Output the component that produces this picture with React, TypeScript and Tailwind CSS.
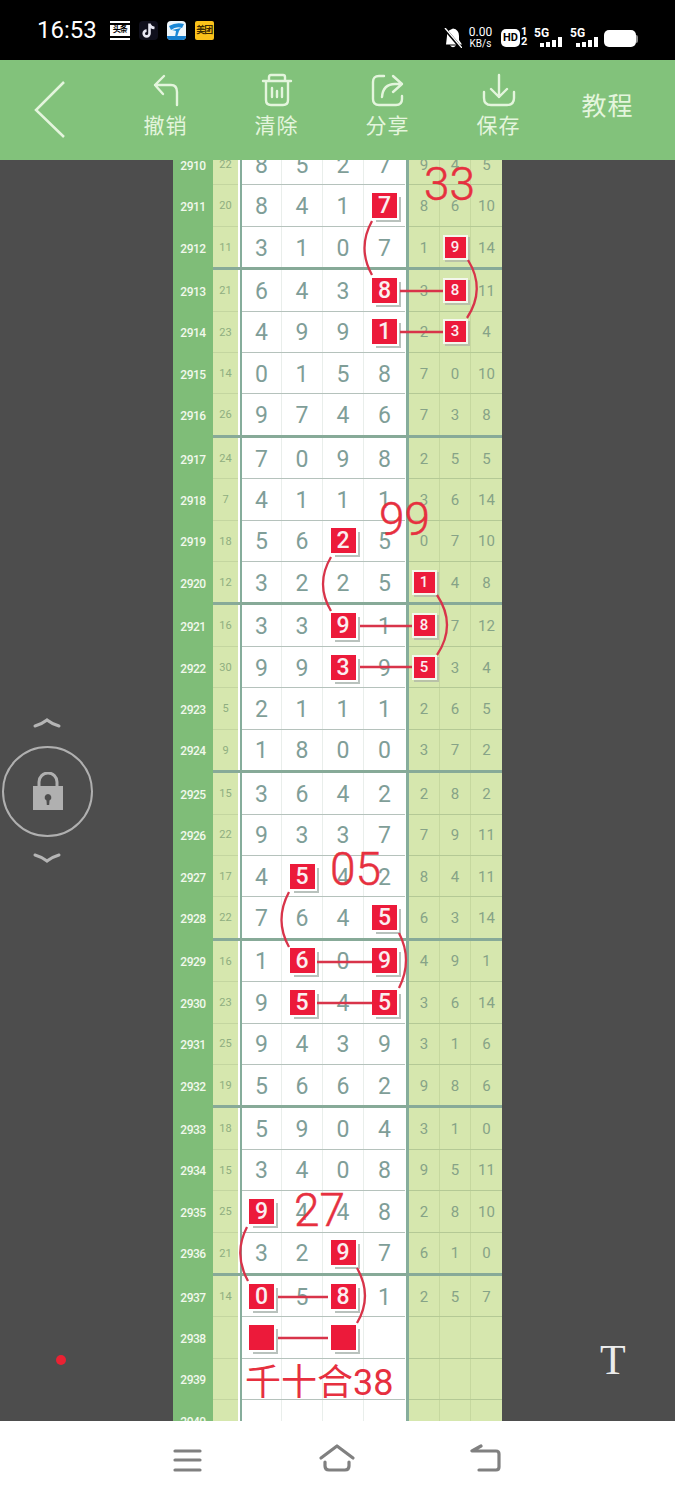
import type { ReactNode } from "react";

type Row = {
  no: number;
  count?: number;
  main?: (number | null)[];
  side?: number[];
  hitMain?: number[];
  hitSide?: number[];
};

const rows: Row[] = [
  { no: 2910, count: 22, main: [8, 5, 2, 7], side: [9, 4, 5] },
  { no: 2911, count: 20, main: [8, 4, 1, 7], side: [8, 6, 10], hitMain: [3] },
  { no: 2912, count: 11, main: [3, 1, 0, 7], side: [1, 9, 14], hitSide: [1] },
  { no: 2913, count: 21, main: [6, 4, 3, 8], side: [3, 8, 11], hitMain: [3], hitSide: [1] },
  { no: 2914, count: 23, main: [4, 9, 9, 1], side: [2, 3, 4], hitMain: [3], hitSide: [1] },
  { no: 2915, count: 14, main: [0, 1, 5, 8], side: [7, 0, 10] },
  { no: 2916, count: 26, main: [9, 7, 4, 6], side: [7, 3, 8] },
  { no: 2917, count: 24, main: [7, 0, 9, 8], side: [2, 5, 5] },
  { no: 2918, count: 7, main: [4, 1, 1, 1], side: [3, 6, 14] },
  { no: 2919, count: 18, main: [5, 6, 2, 5], side: [0, 7, 10], hitMain: [2] },
  { no: 2920, count: 12, main: [3, 2, 2, 5], side: [1, 4, 8], hitSide: [0] },
  { no: 2921, count: 16, main: [3, 3, 9, 1], side: [8, 7, 12], hitMain: [2], hitSide: [0] },
  { no: 2922, count: 30, main: [9, 9, 3, 9], side: [5, 3, 4], hitMain: [2], hitSide: [0] },
  { no: 2923, count: 5, main: [2, 1, 1, 1], side: [2, 6, 5] },
  { no: 2924, count: 9, main: [1, 8, 0, 0], side: [3, 7, 2] },
  { no: 2925, count: 15, main: [3, 6, 4, 2], side: [2, 8, 2] },
  { no: 2926, count: 22, main: [9, 3, 3, 7], side: [7, 9, 11] },
  { no: 2927, count: 17, main: [4, 5, 4, 2], side: [8, 4, 11], hitMain: [1] },
  { no: 2928, count: 22, main: [7, 6, 4, 5], side: [6, 3, 14], hitMain: [3] },
  { no: 2929, count: 16, main: [1, 6, 0, 9], side: [4, 9, 1], hitMain: [1, 3] },
  { no: 2930, count: 23, main: [9, 5, 4, 5], side: [3, 6, 14], hitMain: [1, 3] },
  { no: 2931, count: 25, main: [9, 4, 3, 9], side: [3, 1, 6] },
  { no: 2932, count: 19, main: [5, 6, 6, 2], side: [9, 8, 6] },
  { no: 2933, count: 18, main: [5, 9, 0, 4], side: [3, 1, 0] },
  { no: 2934, count: 15, main: [3, 4, 0, 8], side: [9, 5, 11] },
  { no: 2935, count: 25, main: [9, 4, 4, 8], side: [2, 8, 10], hitMain: [0] },
  { no: 2936, count: 21, main: [3, 2, 9, 7], side: [6, 1, 0], hitMain: [2] },
  { no: 2937, count: 14, main: [0, 5, 8, 1], side: [2, 5, 7], hitMain: [0, 2] },
  { no: 2938, main: [null, null, null, null], hitMain: [0, 2] },
  { no: 2939 },
  { no: 2940 },
];

const mainWidths = ["w-[40px]", "w-[41px]", "w-[41px]", "w-[41px]"];

function MainCell({ value, hit, index }: { value: number | null | undefined; hit: boolean; index: number }) {
  return (
    <div className={`${mainWidths[index]} flex h-full items-center justify-center border-r border-[#e9eeeb] last:border-r-0`}>
      {hit ? (
        <div className="flex h-[25px] w-[25px] items-center justify-center bg-[#ec1a3a] text-[23px] font-medium leading-none text-[#fbeef0] shadow-[2px_2px_0_#ffffff,4px_4px_0_#b9c2bd]">
          {value}
        </div>
      ) : (
        <span className="pt-[2px] text-[23px] leading-none text-[#7f9e98]">{value}</span>
      )}
    </div>
  );
}

function SideCell({ value, hit }: { value?: number; hit: boolean }) {
  return (
    <div className="flex h-full w-[31px] items-center justify-center border-r border-[#c6d89f] last:border-r-0">
      {hit ? (
        <div className="flex h-[21px] w-[21px] items-center justify-center bg-[#ec1a3a] text-[15px] font-medium leading-none text-[#fbeef0] shadow-[0_0_0_2px_#f4f7ec,2px_2px_0_2px_#b9c2a8]">
          {value}
        </div>
      ) : (
        <span className="pt-[2px] text-[15px] leading-none text-[#86a387]">{value}</span>
      )}
    </div>
  );
}

function TableRow({ row }: { row: Row }) {
  return (
    <div className="flex h-[41.42px] w-[329px]">
      <div className="flex w-[40px] items-center justify-center bg-[#7fbd78] pt-[2px] text-[12px] font-medium tracking-[-0.5px] text-[#f1f8ec]">
        {row.no}
      </div>
      <div className="flex w-[25px] items-center justify-center border-b border-[#c4d6a0] bg-[#d6e7ae] pt-[2px] text-[11px] text-[#8fae80]">
        {row.count}
      </div>
      <div className="w-[2px] bg-white" />
      <div className="w-[2px] bg-[#86ad9b]" />
      <div className="flex border-b border-[#b5c2bc] bg-white">
        {[0, 1, 2, 3].map((i) => (
          <MainCell key={i} index={i} value={row.main?.[i]} hit={!!row.hitMain?.includes(i)} />
        ))}
      </div>
      <div className="w-[1px] bg-white" />
      <div className="w-[3px] bg-[#86ad9b]" />
      <div className="flex border-b border-[#b4c995] bg-[#d6e7ae]">
        {[0, 1, 2].map((i) => (
          <SideCell key={i} value={row.side?.[i]} hit={!!row.hitSide?.includes(i)} />
        ))}
      </div>
    </div>
  );
}

function GroupLine() {
  return (
    <div className="relative -mt-px flex h-[3px] w-[329px] bg-[#87aa98]">
      <div className="w-[40px] bg-[#7fbd78]" />
    </div>
  );
}

function ToolButton({ icon, label }: { icon: ReactNode; label: string }) {
  return (
    <div className="flex w-[111px] flex-col items-center">
      {icon}
      <span className="mt-[6px] text-[21px] leading-[26px] tracking-[1px] text-[#e4f5dd]">{label}</span>
    </div>
  );
}

function Arcs() {
  const arcs = [
    "M372 221Q357 248 372 275",
    "M468 260Q486 289 467 318",
    "M331 557Q315 584 331 611",
    "M437 595Q457 625 437 655",
    "M289 892Q274 920 289 947",
    "M399 933Q413 960 399 988",
    "M247 1227Q233 1254 248 1281",
    "M357 1268Q373 1296 357 1323",
  ];
  const lines = [
    [400, 291, 443],
    [400, 332, 443],
    [360, 626, 412],
    [360, 667, 412],
    [317, 962, 372],
    [317, 1003, 372],
    [278, 1297, 328],
    [278, 1338, 328],
  ];
  return (
    <svg className="absolute left-0 top-0" width="675" height="1421" viewBox="0 0 675 1421" fill="none" stroke="#d8344a" strokeWidth="2.3">
      {arcs.map((d) => (
        <path key={d} d={d} />
      ))}
      {lines.map(([x1, y, x2]) => (
        <line key={y} x1={x1} y1={y} x2={x2} y2={y} />
      ))}
    </svg>
  );
}

function Note({ className, children }: { className: string; children: ReactNode }) {
  return <div className={`absolute font-light leading-none text-[#e6303f] [-webkit-text-stroke:0.5px_#e6303f] ${className}`}>{children}</div>;
}

function Signal({ left }: { left: string }) {
  return (
    <div className={`absolute top-[26px] ${left} h-[22px] w-[30px]`}>
      <span className="absolute left-0 top-[1px] text-[12px] font-bold leading-[12px]">5G</span>
      <div className="absolute bottom-[1px] left-[6px] flex items-end gap-[2px]">
        <div className="h-[4px] w-[4px] bg-white" />
        <div className="h-[5px] w-[4px] bg-white" />
        <div className="h-[7px] w-[4px] bg-white" />
        <div className="h-[10px] w-[4px] bg-white" />
      </div>
    </div>
  );
}

function StatusBar() {
  return (
    <div className="relative flex h-[60px] items-center bg-black pl-[37px] text-white">
      <span className="text-[24px] leading-none">16:53</span>
      <div className="ml-[13px] flex items-center gap-[9px]">
        <div className="flex h-[19px] w-[20px] items-center justify-center border-y-2 border-white">
          <div className="flex h-[11px] w-full items-center justify-center bg-white text-[8px] font-bold leading-none tracking-[-1px] text-black">头条</div>
        </div>
        <div className="flex h-[19px] w-[19px] items-center justify-center rounded-[4px] bg-[#10101c]">
          <svg width="13" height="15" viewBox="0 0 13 15" fill="none" stroke="#e8e8f2" strokeWidth="2.6">
            <path d="M7.5 0.5V10.5A2.9 2.9 0 1 1 4.6 7.6M7.5 1.5Q8.5 4.5 12.5 5" />
          </svg>
        </div>
        <div className="relative flex h-[19px] w-[19px] items-center justify-center overflow-hidden rounded-[4px] bg-[#eef6fb]">
          <svg width="17" height="14" viewBox="0 0 17 14" fill="#1a88d6">
            <path d="M1 3Q8 -1 16 1L14 5Q8 3 3 7ZM4 7L13 5 11 8 9 14H7L8 8Z" />
          </svg>
          <div className="absolute bottom-0 h-[4px] w-full bg-[#1680d0]" />
        </div>
        <div className="flex h-[19px] w-[19px] items-center justify-center rounded-[2px] bg-[#fbc21a] text-[9px] font-bold leading-none tracking-[-1px] text-[#3a2a00]">美团</div>
      </div>
      <div className="absolute left-[444px] top-[28px]">
        <svg width="18" height="20" viewBox="0 0 18 20" fill="#fff">
          <path d="M9 0.5Q15 1.5 15 8V12L18 16.5H2L3 8Q3 4 5 2.5ZM6 17.5H12Q9 21 6 17.5Z" />
          <path d="M0 0L17 20" stroke="#000" strokeWidth="3" />
          <path d="M1 0L18 20" stroke="#fff" strokeWidth="1.4" />
        </svg>
      </div>
      <div className="absolute left-[468px] top-[27px] flex w-[25px] flex-col items-center text-[12px] leading-[11px]">
        <span>0.00</span>
        <span className="text-[10px]">KB/s</span>
      </div>
      <div className="absolute left-[501px] top-[29px] flex h-[18px] w-[19px] items-center justify-center rounded-[5px] bg-white text-[11px] font-bold text-black">HD</div>
      <div className="absolute left-[521px] top-[27px] flex flex-col items-center text-[11px] font-bold leading-[10px]">
        <span>1</span>
        <span>2</span>
      </div>
      <Signal left="left-[534px]" />
      <Signal left="left-[570px]" />
      <div className="absolute left-[604px] top-[30px] flex items-center">
        <div className="h-[17px] w-[32px] rounded-[5px] bg-white" />
        <div className="h-[8px] w-[2px] rounded-r-[2px] bg-[#8a8a8a]" />
      </div>
    </div>
  );
}

export default function App() {
  return (
    <div className="relative flex h-[1500px] w-[675px] flex-col overflow-hidden bg-[#4d4d4d] font-['Roboto','Noto_Sans_CJK_SC',sans-serif]">
      <StatusBar />

      <header className="relative z-10 flex h-[100px] items-start bg-[#82c27b] pt-[13px]">
        <div className="flex h-[87px] w-[110px] items-start pl-[34px] pt-[8px]">
          <svg width="32" height="58" viewBox="0 0 32 58" fill="none" stroke="#e4f5dd" strokeWidth="2.5">
            <path d="M30 1L2 29L30 56" />
          </svg>
        </div>
        <ToolButton
          label="撤销"
          icon={
            <svg width="32" height="34" viewBox="0 0 32 34" fill="none" stroke="#e4f5dd" strokeWidth="2.4" strokeLinecap="round" strokeLinejoin="round">
              <path d="M14 3L5 12L13 21M5 12H21Q27 12 27 19V32" />
            </svg>
          }
        />
        <ToolButton
          label="清除"
          icon={
            <svg width="32" height="34" viewBox="0 0 32 34" fill="none" stroke="#e4f5dd" strokeWidth="2.4" strokeLinecap="round" strokeLinejoin="round">
              <path d="M2 8H30M8 8V4Q8 2 10 2H22Q24 2 24 4V8M5 8V27Q5 32 10 32H22Q27 32 27 27V8M11 15V24M16 18V24M21 15V24" />
            </svg>
          }
        />
        <ToolButton
          label="分享"
          icon={
            <svg width="34" height="34" viewBox="0 0 34 34" fill="none" stroke="#e4f5dd" strokeWidth="2.4" strokeLinecap="round" strokeLinejoin="round">
              <path d="M13 3H8Q2 3 2 9V26Q2 32 8 32H25Q31 32 31 26V23M22 3L31 11L22 19M31 11H24Q12 11 11 24" />
            </svg>
          }
        />
        <ToolButton
          label="保存"
          icon={
            <svg width="34" height="34" viewBox="0 0 34 34" fill="none" stroke="#e4f5dd" strokeWidth="2.4" strokeLinecap="round" strokeLinejoin="round">
              <path d="M17 2V24M9 16L17 24L25 16M2 19V25Q2 32 9 32H25Q32 32 32 25V19" />
            </svg>
          }
        />
        <div className="-ml-[2px] flex h-[68px] w-[111px] items-center justify-center text-[25px] tracking-[1px] text-[#e4f5dd]">教程</div>
      </header>

      <main className="relative flex h-[1261px] justify-center overflow-hidden">
        <div className="mt-[-16px] w-[329px]">
          {rows.map((row) => (
            <div key={row.no}>
              <TableRow row={row} />
              {(row.no - 2908) % 4 === 0 && <GroupLine />}
            </div>
          ))}
        </div>
      </main>

      <div className="pointer-events-none absolute left-0 top-0 h-[1421px] w-[675px]">
        <Arcs />
        <Note className="left-[424px] top-[161px] text-[46px]">33</Note>
        <Note className="left-[379px] top-[496px] text-[46px]">99</Note>
        <Note className="left-[330px] top-[846px] text-[46px]">05</Note>
        <Note className="left-[294px] top-[1187px] text-[46px]">27</Note>
        <div className="absolute left-[245px] top-[1365px] text-[36px] leading-none text-[#e6303f]">千十合38</div>

        <div className="absolute left-[33px] top-[718px] h-[10px] w-[28px]">
          <svg width="28" height="10" viewBox="0 0 28 10" fill="none" stroke="#b5b5b5" strokeWidth="3" strokeLinecap="round">
            <path d="M2 8Q9 6 14 2Q19 6 26 8" />
          </svg>
        </div>
        <div className="absolute left-[2px] top-[746px] flex h-[91px] w-[91px] items-center justify-center rounded-full border-2 border-[#b0b0b0]">
          <svg width="30" height="40" viewBox="0 0 30 40" fill="none">
            <path d="M6 16V10A9 9 0 0 1 24 10V16" stroke="#b0b0b0" strokeWidth="3" />
            <path d="M0 14H30V38H0Z M15 22A3.5 3.5 0 0 0 13.5 28.6L13.8 33H16.2L16.5 28.6A3.5 3.5 0 0 0 15 22Z" fill="#b0b0b0" fillRule="evenodd" />
          </svg>
        </div>
        <div className="absolute left-[33px] top-[853px] h-[10px] w-[28px]">
          <svg width="28" height="10" viewBox="0 0 28 10" fill="none" stroke="#b5b5b5" strokeWidth="3" strokeLinecap="round">
            <path d="M2 2Q9 4 14 8Q19 4 26 2" />
          </svg>
        </div>

        <div className="absolute left-[56px] top-[1355px] h-[10px] w-[10px] rounded-full bg-[#ea2233]" />
        <div className="absolute left-[600px] top-[1339px] font-['Liberation_Serif',serif] text-[42px] leading-none text-[#ececec]">T</div>
      </div>

      <nav className="relative z-10 flex h-[79px] flex-1 items-start bg-white pl-[171px] pt-[23px]">
        <svg width="31" height="28" viewBox="0 0 31 28" fill="none" stroke="#808080" strokeWidth="3.2" strokeLinecap="round">
          <path d="M4 7H29M4 16H29M4 26H29" />
        </svg>
        <svg className="ml-[116px]" width="38" height="28" viewBox="0 0 38 28" fill="none" stroke="#808080" strokeWidth="3.2" strokeLinecap="round" strokeLinejoin="round">
          <path d="M3 14L19 2L35 14M7 18V22Q7 26 11 26H27Q31 26 31 22V18" />
        </svg>
        <svg className="ml-[114px]" width="32" height="28" viewBox="0 0 32 28" fill="none" stroke="#808080" strokeWidth="3.2" strokeLinecap="round" strokeLinejoin="round">
          <path d="M11 2L2 7H26Q29 7 29 10V23Q29 26 26 26H9" />
        </svg>
      </nav>
    </div>
  );
}
